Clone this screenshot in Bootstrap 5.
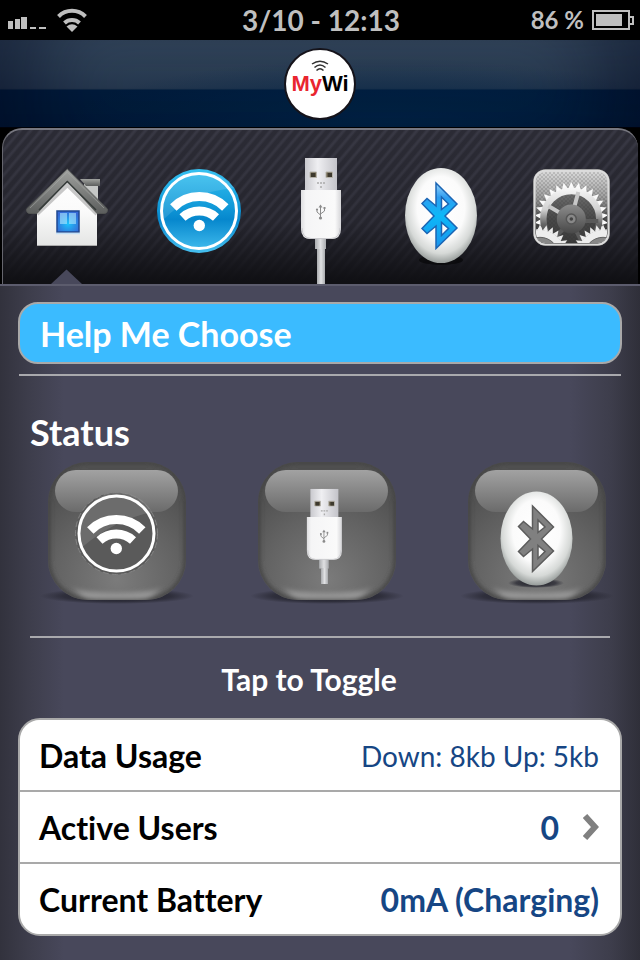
<!DOCTYPE html>
<html lang="en">
<head>
<meta charset="utf-8">
<meta name="viewport" content="width=device-width, initial-scale=1">
<title>MyWi</title>
<link href="https://cdn.jsdelivr.net/npm/bootstrap@5.3.0/dist/css/bootstrap.min.css" rel="stylesheet">
<style>
body{background:linear-gradient(90deg,#32323d 0,#3d3d4b 28px,#48485b 64px,#48485b calc(100% - 70px),#3d3d4b calc(100% - 28px),#2f2f39 100%);font-family:Lato,"Open Sans",sans-serif;font-weight:700;font-variant-ligatures:none}
svg{display:block}
.status-bar{height:40px;background:#000;color:#bfbfbf;font-size:28px;line-height:40px;padding:0 6px 0 8px}
.status-side{flex:1 1 0}
.charge{font-size:24px}
.brand-bar{height:88px;background:radial-gradient(ellipse 320px 70px at 60% 100%,#00264acc,#00264a00),linear-gradient(180deg,#35495f 0,#26384f 48px,#22344b 49px,#001c3c 50px,#001a38 100%);box-shadow:inset 80px 0 80px -40px #00061b77,inset -80px 0 80px -40px #00061b77,inset 0 -1px 0 #000}
.brand-logo{width:72px;height:72px;background:#fff;border:2px solid #15131a;font:700 22px/24px "Liberation Sans",sans-serif;color:#000;padding-top:10px}
.brand-logo span{color:#e9252f}
.tab-wrap{background:#000;padding:0 2px}
.tab-panel{height:156px;padding:0 28px 0 23px;border-top:2px solid #77777f;border-left:1px solid #66666e;border-radius:20px 20px 0 0;
background:linear-gradient(180deg,#34343f55 0,#23232b77 60%,#101014 98%),repeating-linear-gradient(130deg,#272730 0 3px,#3a3a46 5px 6px,#272730 8px)}
.tab-panel button,.tiles button{border:0;background:none;padding:0}
.screen{padding:16px 18px 24px;border-top:2px solid #5c5c6d}
.help-btn{height:62px;border:2px solid #a9a9a9;border-radius:20px;background:#3bbbff;color:#fff;font:inherit;font-size:34px;padding:0 20px}
.rule{height:2px;background:#a9a9ad}
.rule-top{margin:10px 1px 0}
.rule-low{margin:26px 12px 0}
.status-title{font-size:36px;line-height:40px;font-weight:700;color:#fff;margin:36px 0 8px 12px}
.tiles{padding:0 5px 0 19px}
.hint{font-size:30px;line-height:36px;margin:23px 0 21px;color:#fff;padding-right:22px}
.info{border:2px solid #a9a9a9;border-radius:22px;background:#fff;overflow:hidden}
.info .list-group-item{height:72px;border:0;border-bottom:2px solid #a9a9a9;padding:2px 21px 0 19px;font-size:32px;color:#000;background:#fff}
.info .list-group-item:last-child{height:70px;border:0}
.val{color:#164684}
.val-thin{font-weight:400;font-size:28px}
</style>
</head>
<body>
<svg width="0" height="0" class="position-absolute" aria-hidden="true">
<defs>
<linearGradient id="roof" x2="0" y2="1"><stop offset="0" stop-color="#a0a29f"/><stop offset="1" stop-color="#5c5e5d"/></linearGradient>
<linearGradient id="wall" x2="0" y2="1"><stop offset="0" stop-color="#fff"/><stop offset=".5" stop-color="#fafafa"/><stop offset="1" stop-color="#e4e5e4"/></linearGradient>
<radialGradient id="pane" cy=".6" r=".6"><stop offset="0" stop-color="#1cc3fb"/><stop offset="1" stop-color="#3568d6"/></radialGradient>
<linearGradient id="wf" x2="0" y2="1"><stop offset="0" stop-color="#35c1f1"/><stop offset=".45" stop-color="#1199d8"/><stop offset=".6" stop-color="#0687cd"/><stop offset="1" stop-color="#46c0f0"/></linearGradient>
<linearGradient id="metal"><stop offset="0" stop-color="#c9c9ce"/><stop offset=".4" stop-color="#efeff2"/><stop offset="1" stop-color="#c3c3c9"/></linearGradient>
<linearGradient id="plug"><stop offset="0" stop-color="#dedee0"/><stop offset=".12" stop-color="#f5f5f6"/><stop offset=".85" stop-color="#fafafa"/><stop offset="1" stop-color="#d5d5d8"/></linearGradient>
<linearGradient id="cord"><stop offset="0" stop-color="#a9abae"/><stop offset=".5" stop-color="#e0e1e3"/><stop offset="1" stop-color="#a9abae"/></linearGradient>
<radialGradient id="egg" cx=".5" cy=".42" r=".6"><stop offset="0" stop-color="#fff"/><stop offset=".55" stop-color="#fbfbfb"/><stop offset=".8" stop-color="#d6d9d7"/><stop offset="1" stop-color="#8a908e"/></radialGradient>
<linearGradient id="btb" x2="0" y2="1"><stop offset="0" stop-color="#9bd4fa"/><stop offset=".22" stop-color="#2f9df0"/><stop offset=".5" stop-color="#0cb8f8"/><stop offset="1" stop-color="#1c93ec"/></linearGradient>
<linearGradient id="gbg" x2="0" y2="1"><stop offset="0" stop-color="#dcdcdc"/><stop offset=".35" stop-color="#a0a0a0"/><stop offset=".65" stop-color="#505050"/><stop offset="1" stop-color="#2c2c2c"/></linearGradient>
<linearGradient id="gw" gradientUnits="userSpaceOnUse" x1="0" y1="-36" x2="0" y2="30"><stop offset="0" stop-color="#fff"/><stop offset=".4" stop-color="#d2d2d2"/><stop offset=".62" stop-color="#666"/><stop offset="1" stop-color="#222"/></linearGradient>
<linearGradient id="hub" x2="0" y2="1"><stop offset="0" stop-color="#8c8c8c"/><stop offset="1" stop-color="#484848"/></linearGradient>
<pattern id="mesh" width="4" height="4" patternUnits="userSpaceOnUse"><circle cx="1" cy="1" r=".7" fill="#000" opacity=".35"/><circle cx="3" cy="3" r=".7" fill="#000" opacity=".35"/></pattern>
<radialGradient id="tile" cx=".5" cy=".85" r=".75"><stop offset="0" stop-color="#7b7b7b"/><stop offset=".6" stop-color="#636363"/><stop offset="1" stop-color="#515151"/></radialGradient>
<linearGradient id="gloss" x2="0" y2="1"><stop offset="0" stop-color="#a2a2a2"/><stop offset="1" stop-color="#6b6b6b"/></linearGradient>
<linearGradient id="lip" x2="0" y2="1"><stop offset="0" stop-color="#999" stop-opacity="0"/><stop offset=".7" stop-color="#a0a0a0"/><stop offset="1" stop-color="#777"/></linearGradient>
<radialGradient id="shade"><stop offset="0" stop-color="#181820"/><stop offset=".7" stop-color="#24242e" stop-opacity=".7"/><stop offset="1" stop-color="#24242e" stop-opacity="0"/></radialGradient>
<filter id="soft" x="-20%" y="-20%" width="140%" height="140%"><feGaussianBlur stdDeviation="2"/></filter>
<clipPath id="tclip"><rect width="138" height="138" rx="40"/></clipPath>
<g id="arcs" fill="none" stroke="#fff"><path stroke-width="9" d="M173.300 207.500A36.500 36.500 0 0 1 225.300 207.500"/><path stroke-width="9" d="M182.500 217.500A25 25 0 0 1 216 217.500"/><circle cx="199.300" cy="225.500" r="5.700" fill="#fff" stroke="none"/></g>
<g id="usb">
<path fill="url(#metal)" d="M305 158H337V191H305z"/><path fill="#675e49" stroke="#b5b2aa" d="M310 172H316.500V177.500H310zM326 172H332.500V177.500H326z"/><path fill="#3d392e" d="M311 173h4v4h-4zM328 173h4v4h-4z"/>
<path stroke="#aaa" stroke-width="1.500" stroke-dasharray="2 1" fill="none" d="M317 183h8M321 186v3"/>
<path fill="url(#plug)" d="M301 190H341V229Q341 239 331 239H311Q301 239 301 229z"/><path fill="none" stroke="#c9c9cd" d="M302 228Q302 238 311 238.500H331Q340 238 340 228"/>
<path d="M320.500 206V217M317 209V212L320.500 215M324.500 208V211L320.500 214" fill="none" stroke="#8b8b8b"/><path fill="#8b8b8b" d="M318.500 207.500l2-3 2 3z"/><circle cx="320.500" cy="218" r="1.600" fill="#8b8b8b"/><circle cx="317" cy="209.500" r="1.100" fill="#8b8b8b"/><path fill="#8b8b8b" d="M323.500 207h2v2h-2z"/>
<path fill="url(#cord)" d="M315 239H326V249H315z"/></g>
<path id="rune" fill-rule="evenodd" d="M436 183L457 204 445 216 457 228 436 248.500V226L427 233.500 422 228.500 434 216 422 203.500 427 198.500 436 206zM441.500 197V209.500L448.500 204zM441.500 222.500V235.500L448.500 228.500z"/>
<path id="tooth" d="M-3.200-30L0-37 3.200-30z"/>
<g id="t3"><use href="#tooth"/><use href="#tooth" transform="rotate(12)"/><use href="#tooth" transform="rotate(24)"/></g>
<g id="t15"><use href="#t3"/><use href="#t3" transform="rotate(36)"/><use href="#t3" transform="rotate(72)"/><use href="#t3" transform="rotate(108)"/><use href="#t3" transform="rotate(144)"/></g>
<g id="teeth"><use href="#t15"/><use href="#t15" transform="rotate(180)"/></g>
<clipPath id="gclip"><rect x="535" y="172" width="71" height="71" rx="9"/></clipPath>
<g id="tilebg">
<ellipse cx="69" cy="134" rx="77" ry="8" fill="url(#shade)"/>
<rect width="138" height="138" rx="40" fill="url(#tile)"/>
<g clip-path="url(#tclip)"><rect width="138" height="138" rx="40" fill="none" stroke="#444" stroke-width="5" filter="url(#soft)"/><path d="M22 124Q40 131 69 131T116 124Q104 138 88 138H50Q34 138 22 124z" fill="url(#lip)" filter="url(#soft)"/></g>
<rect x="7" y="8" width="123" height="42" rx="21" fill="url(#gloss)"/></g>
</defs>
</svg>

<header>
<div class="status-bar d-flex align-items-center">
  <div class="status-side d-flex align-items-center gap-2">
    <svg width="40" height="28" viewBox="0 0 40 28" fill="#bfbfbf" role="img" aria-label="Signal"><path d="M0 15h5v8H0zM7 13h5v10H7zM13 11h6v12h-6zM22 21h6v2h-6zM31 21h7v2h-7z"/></svg>
    <svg width="32" height="28" viewBox="0 0 32 28" fill="none" stroke="#bfbfbf" stroke-width="4" role="img" aria-label="Wi-Fi"><path d="M2.500 10.500A19 19 0 0 1 29.500 10.500M8.500 17A11 11 0 0 1 23.500 17"/><path stroke="none" fill="#bfbfbf" d="M16 26L10.500 20.500Q16 16 21.500 20.500z"/></svg>
  </div>
  <time>3/10 - 12:13</time>
  <div class="status-side d-flex align-items-center justify-content-end gap-2"><span class="charge">86 %</span>
    <svg width="42" height="20" viewBox="0 0 42 20" role="img" aria-label="Battery"><path fill="none" stroke="#bfbfbf" stroke-width="2" d="M1 1H37V19H1zM37 7H41V14H37"/><path fill="#bfbfbf" d="M4 4H30V16H4z"/></svg>
  </div>
</div>
<div class="brand-bar d-flex align-items-center justify-content-center">
  <div class="brand-logo rounded-circle d-flex flex-column align-items-center">
    <svg width="18" height="12" viewBox="0 0 18 12" fill="none" stroke="#333" stroke-width="1.500" aria-hidden="true"><path d="M1 4Q9-1.500 17 4M3.500 7.500Q9 2.500 14.500 7.500M5.500 10.500Q9 7 12.500 10.500"/></svg>
    <div><span>My</span>Wi</div>
  </div>
</div>
</header>

<nav class="tab-wrap" aria-label="Sections">
<div class="tab-panel d-flex justify-content-between">
  <button type="button" aria-label="Home" aria-current="page"><svg width="82" height="154" viewBox="26 130 82 154">
    <path fill="#c5c7c6" d="M84 184H98V208L84 195z"/><path fill="url(#roof)" d="M80 179H100V186H86z"/>
    <path fill="url(#wall)" d="M37 208L67.500 178 97 208V246H37z"/><path fill="none" stroke="#777" stroke-opacity=".4" stroke-width="4" d="M37 214L67.500 185 97 214"/><path stroke="#aaa" d="M37 245.500H97"/>
    <path fill="url(#roof)" stroke="#555856" stroke-width=".8" d="M67.300 169L107.500 209Q108 214 103 213.500H97L67.300 181 37 213.500H31Q26 214 26.500 209z"/>
    <path d="M39 210L67.300 181.500 96 210" fill="none" stroke="#343a38" stroke-width="1.500"/><path d="M30 208L67.300 172 104 208" fill="none" stroke="#b0b2af" stroke-opacity=".5"/>
    <path fill="url(#pane)" stroke="#204a91" stroke-width="1.500" d="M57 211H79V232H57z"/><path fill="#b0e7ff" opacity=".6" d="M60 213h7v11h-7zM69 213h7v11h-7z"/><path stroke="#c4e1f7" stroke-width="1.500" d="M56 233.500H80"/>
    <path fill="#48485b" d="M51 284L66.500 269.500 82 284z"/></svg></button>
  <button type="button" aria-label="Wi-Fi"><svg width="84" height="154" viewBox="157 130 84 154"><circle cx="199" cy="211" r="42" fill="url(#wf)"/><path fill="#fff" opacity=".12" d="M163 220Q190 192 234 188A40 40 0 0 0 163 205z"/><circle cx="199" cy="211" r="37.500" fill="none" stroke="#fff" stroke-width="3"/><use href="#arcs"/></svg></button>
  <button type="button" aria-label="USB"><svg width="65" height="154" viewBox="291 130 65 154"><use href="#usb"/><path fill="url(#cord)" d="M317 249h8v35h-8z"/></svg></button>
  <button type="button" aria-label="Bluetooth"><svg width="79" height="154" viewBox="405 130 79 154"><ellipse cx="441" cy="260" rx="22" ry="5" fill="#000" opacity=".5"/><ellipse cx="441" cy="215.500" rx="36" ry="47.500" fill="url(#egg)"/><use href="#rune" fill="url(#btb)" stroke="#1b65b4" stroke-width="1.500"/></svg></button>
  <button type="button" aria-label="Settings"><svg width="77" height="154" viewBox="532 130 77 154">
    <rect x="532.500" y="169.500" width="76" height="76" rx="12" fill="#a9a9a9" stroke="#666"/><rect x="533.500" y="170.500" width="74" height="74" rx="11" fill="url(#gbg)" stroke="#dcdcdc" stroke-width="2"/>
    <g clip-path="url(#gclip)"><rect x="534" y="170" width="74" height="75" fill="url(#mesh)"/>
    <g transform="translate(570.300 219)"><circle r="27" fill="#444" opacity=".6"/><use href="#teeth" fill="url(#gw)"/><circle r="28" fill="none" stroke="url(#gw)" stroke-width="6.500"/><path stroke="#c8c8c8" stroke-width="4" d="M3-12L7-27M-11-6L-23-13"/><path stroke="#5a5a5a" stroke-width="4" d="M12 2H27M-8 10L-20 22M5 12L12 26"/><circle r="14.500" fill="url(#hub)"/><circle r="5" fill="#888" stroke="#555" stroke-width="1.500"/><circle r="1.800" fill="#444"/></g>
    <g transform="translate(539 256) scale(.85)"><g fill="#ededed"><use href="#teeth"/><circle r="30.500"/></g><circle r="22" fill="#888" stroke="#555"/></g>
    <g transform="translate(602 256) scale(.85)"><g fill="#ededed"><use href="#teeth"/><circle r="30.500"/></g><circle r="22" fill="#888" stroke="#555"/></g></g></svg></button>
</div>
</nav>

<main class="screen">
  <button type="button" class="help-btn d-flex align-items-center w-100">Help Me Choose</button>
  <div class="rule rule-top"></div>
  <h1 class="status-title">Status</h1>
  <div class="tiles d-flex justify-content-between">
    <button type="button" aria-label="Toggle Wi-Fi"><svg width="160" height="150" viewBox="38 460 160 150"><use href="#tilebg" x="49" y="462"/><circle cx="117.500" cy="533.500" r="41" fill="#5a5a5a" stroke="#858585" stroke-dasharray="6 3"/><path fill="#999" opacity=".3" d="M82 548Q115 520 153 512A38 38 0 0 0 82 525z"/><circle cx="117.500" cy="533.500" r="37.500" fill="none" stroke="#fff" stroke-width="3"/><use href="#arcs" x="-82" y="323"/></svg></button>
    <button type="button" aria-label="Toggle USB"><svg width="160" height="150" viewBox="248 460 160 150"><use href="#tilebg" x="259" y="462"/><use href="#usb" transform="translate(44.500 350.700) scale(.875)"/><path fill="url(#cord)" d="M322 568h7v16h-7z"/></svg></button>
    <button type="button" aria-label="Toggle Bluetooth"><svg width="160" height="150" viewBox="458 460 160 150"><use href="#tilebg" x="469" y="462"/><ellipse cx="537" cy="583" rx="28" ry="5" fill="url(#shade)"/><ellipse cx="537.500" cy="538.500" rx="36" ry="47" fill="url(#egg)"/><use href="#rune" x="97.500" y="323" fill="#808080" stroke="#5c5c5c" stroke-width="1.500"/></svg></button>
  </div>
  <div class="rule rule-low"></div>
  <p class="hint text-center">Tap to Toggle</p>
  <div class="info list-group">
    <div class="list-group-item d-flex align-items-center justify-content-between"><span>Data Usage</span><span class="val val-thin">Down: 8kb Up: 5kb</span></div>
    <a href="#" class="list-group-item d-flex align-items-center"><span class="me-auto">Active Users</span><span class="val me-4">0</span><svg width="16" height="28" viewBox="0 0 16 28" aria-hidden="true"><path d="M2 2L12 13 2 24" fill="none" stroke="#808080" stroke-width="6"/></svg></a>
    <div class="list-group-item d-flex align-items-center justify-content-between"><span>Current Battery</span><span class="val">0mA (Charging)</span></div>
  </div>
</main>
<script src="https://cdn.jsdelivr.net/npm/bootstrap@5.3.0/dist/js/bootstrap.bundle.min.js"></script>
</body>
</html>
